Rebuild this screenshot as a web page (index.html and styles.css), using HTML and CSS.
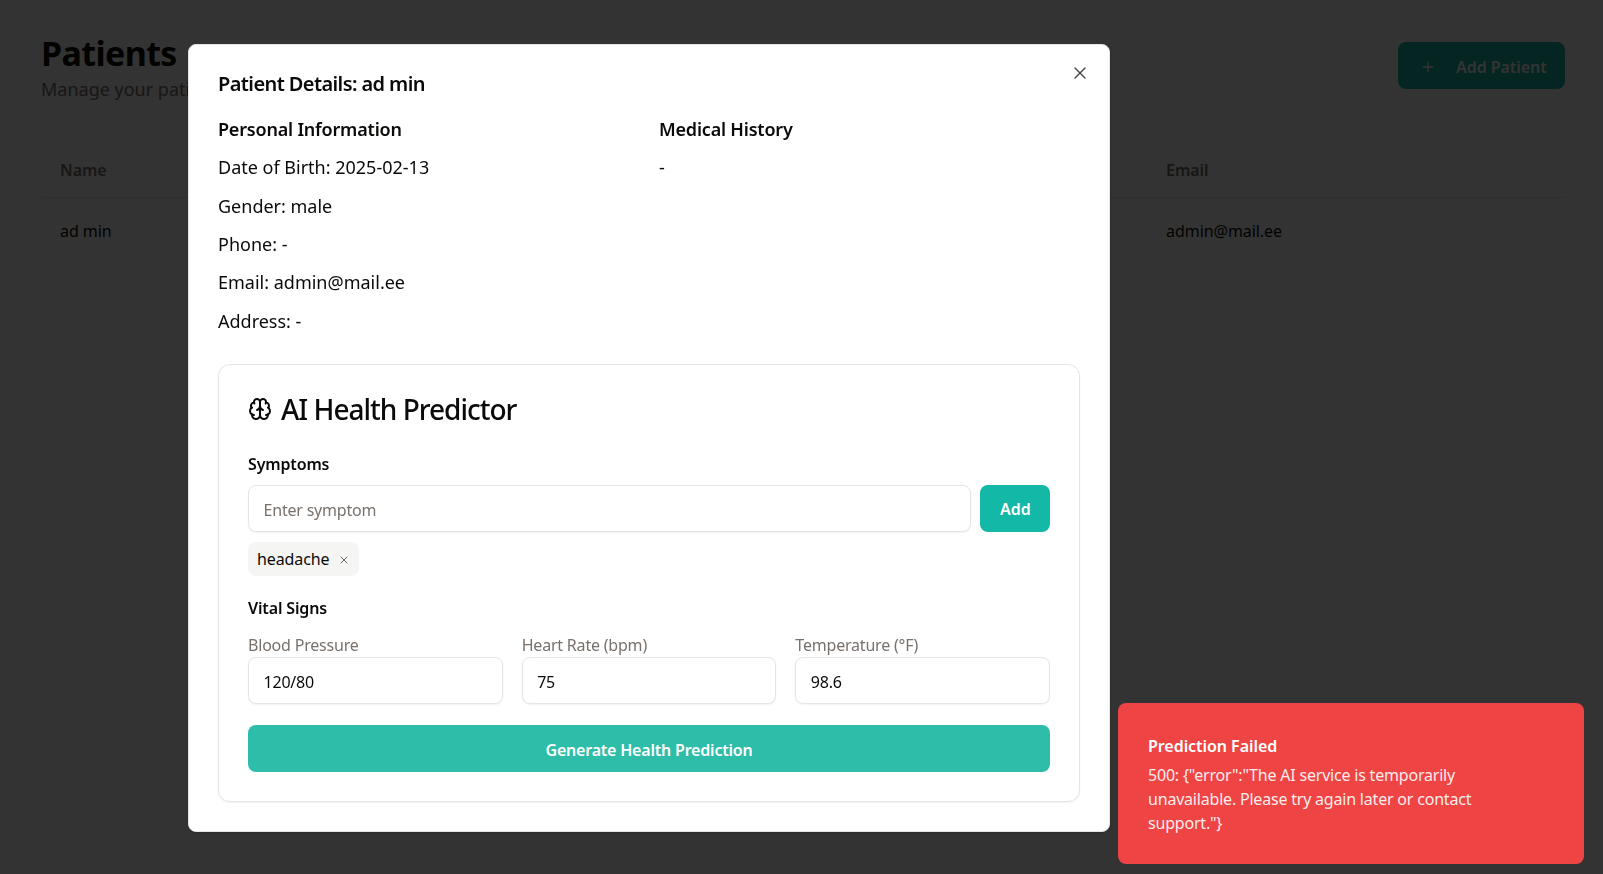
FILE: index.html
```html
<!DOCTYPE html>
<html lang="en">
<head>
<meta charset="utf-8">
<title>Patients</title>
<link rel="stylesheet" href="styles.css">
</head>
<body>
<main class="page">
  <header class="page-head">
    <div>
      <h1 class="page-title">Patients</h1>
      <p class="page-sub">Manage your patients</p>
    </div>
    <button class="add-patient" type="button">
      <svg class="plus" viewBox="0 0 24 24"><path d="M5 12h14M12 5v14"/></svg>
      <span>Add Patient</span>
    </button>
  </header>
  <div class="table">
    <div class="table-row table-headrow"><span>Name</span><span>Email</span></div>
    <div class="table-row"><span>ad min</span><span>admin@mail.ee</span></div>
  </div>
</main>

<div class="overlay">
  <section class="modal">
    <button class="close" type="button" aria-label="Close">
      <svg viewBox="0 0 24 24"><path d="M18 6 6 18M6 6l12 12"/></svg>
    </button>
    <h2 class="modal-title">Patient Details: ad min</h2>
    <div class="info-grid">
      <div>
        <h3 class="info-head">Personal Information</h3>
        <p class="info-line">Date of Birth: 2025-02-13</p>
        <p class="info-line">Gender: male</p>
        <p class="info-line">Phone: -</p>
        <p class="info-line">Email: admin@mail.ee</p>
        <p class="info-line">Address: -</p>
      </div>
      <div>
        <h3 class="info-head">Medical History</h3>
        <p class="info-line">-</p>
      </div>
    </div>
    <div class="card">
      <h2 class="card-title">
        <svg class="brain" viewBox="0 0 24 24"><path d="M12 5a3 3 0 1 0-5.997.125 4 4 0 0 0-2.526 5.77 4 4 0 0 0 .556 6.588A4 4 0 1 0 12 18Z"/><path d="M12 5a3 3 0 1 1 5.997.125 4 4 0 0 1 2.526 5.77 4 4 0 0 1-.556 6.588A4 4 0 1 1 12 18Z"/><path d="M15 13a4.5 4.5 0 0 1-3-4 4.5 4.5 0 0 1-3 4"/><path d="M17.599 6.5a3 3 0 0 0 .399-1.375"/><path d="M6.003 5.125A3 3 0 0 0 6.401 6.5"/><path d="M3.477 10.896a4 4 0 0 1 .585-.396"/><path d="M19.938 10.5a4 4 0 0 1 .585.396"/><path d="M6 18a4 4 0 0 1-1.967-.516"/><path d="M19.967 17.484A4 4 0 0 1 18 18"/></svg>
        <span>AI Health Predictor</span>
      </h2>
      <div class="section-label">Symptoms</div>
      <div class="symptom-row">
        <input class="field" type="text" placeholder="Enter symptom">
        <button class="add-btn" type="button">Add</button>
      </div>
      <div class="chips">
        <span class="chip">headache <svg class="chip-x" viewBox="0 0 24 24"><path d="M18 6 6 18M6 6l12 12"/></svg></span>
      </div>
      <div class="section-label vital-label">Vital Signs</div>
      <div class="vitals">
        <label class="vital"><span class="vital-name">Blood Pressure</span><input class="field" type="text" value="120/80"></label>
        <label class="vital"><span class="vital-name">Heart Rate (bpm)</span><input class="field" type="text" value="75"></label>
        <label class="vital"><span class="vital-name">Temperature (°F)</span><input class="field" type="text" value="98.6"></label>
      </div>
      <button class="generate" type="button">Generate Health Prediction</button>
    </div>
  </section>
</div>

<aside class="toast">
  <div class="toast-title">Prediction Failed</div>
  <div class="toast-text">500: {"error":"The AI service is temporarily unavailable. Please try again later or contact support."}</div>
</aside>
</body>
</html>
```
FILE: styles.css
```css
* { box-sizing: border-box; }
html, body { height: 100%; }
body {
  margin: 0;
  background: #fff;
  color: #0c0a09;
  font-family: "Noto Sans", "Open Sans", sans-serif;
  overflow: hidden;
}
h1, h2, h3, p { margin: 0; }
button, input { font-family: inherit; }
svg { fill: none; stroke: currentColor; stroke-width: 2; stroke-linecap: round; stroke-linejoin: round; }

.page { padding: 33px 38px 0 41px; }
.page-head { display: flex; justify-content: space-between; align-items: flex-start; }
.page-title { font-size: 34px; line-height: 40px; font-weight: 700; letter-spacing: -.6px; }
.page-sub { font-size: 18px; line-height: 26px; color: #78716c; margin-top: 3px; }
.add-patient {
  margin-top: 9px;
  width: 167px;
  height: 47px;
  border: 0;
  border-radius: 8px;
  background: #14b8a6;
  color: #fff;
  display: flex;
  align-items: center;
  gap: 20px;
  padding: 2px 0 0 22px;
  font-size: 16px;
  font-weight: 600;
  letter-spacing: -.05px;
}
.plus { width: 16px; height: 16px; flex: none; }
.table { margin-top: 49px; }
.table-row {
  display: grid;
  grid-template-columns: 1106px 1fr;
  padding: 0 19px;
  height: 66px;
  align-items: center;
  font-size: 16px;
  letter-spacing: -.05px;
}
.table-headrow { height: 47px; padding-bottom: 8px; border-bottom: 1px solid #e7e5e4; color: #78716c; font-weight: 600; }

.overlay {
  position: fixed;
  inset: 0;
  background: rgba(0, 0, 0, .8);
  display: flex;
  align-items: flex-start;
  padding: 44px 0 0 188px;
}
.modal {
  position: relative;
  width: 922px;
  height: 788px;
  padding: 25px 29px 0;
  background: #fff;
  border-radius: 8px;
  box-shadow: 0 1px 3px rgba(0,0,0,.2);
  border: 1px solid #e7e5e4;
}
.close {
  position: absolute;
  top: 18px;
  right: 19px;
  width: 20px;
  height: 20px;
  padding: 0;
  border: 0;
  background: none;
  color: #44403c;
}
.close svg { width: 20px; height: 20px; display: block; stroke-width: 1.6; }
.modal-title { font-size: 20px; line-height: 28px; font-weight: 600; letter-spacing: -.6px; }
.info-grid { display: grid; grid-template-columns: 441px 1fr; margin-top: 18px; }
.info-head { font-size: 18px; line-height: 26px; font-weight: 600; margin-bottom: 11.3px; letter-spacing: -.2px; }
.info-line { font-size: 18px; line-height: 28px; margin-top: 10.4px; }
.info-line:first-of-type { margin-top: 0; }

.card {
  margin-top: 28.7px;
  width: 862px;
  height: 438px;
  padding: 26px 29px;
  border: 1px solid #e7e5e4;
  border-radius: 12px;
  box-shadow: 0 1px 2px rgba(0,0,0,.06);
}
.card-title { display: flex; align-items: center; gap: 9px; font-size: 28px; line-height: 36px; font-weight: 500; letter-spacing: -1px; }
.brain { width: 24px; height: 24px; flex: none; }
.section-label { font-size: 16px; line-height: 24px; font-weight: 600; letter-spacing: -.15px; }
.card-title + .section-label { margin-top: 25px; }
.symptom-row { display: flex; gap: 9px; margin-top: 9px; }
.field {
  flex: 1;
  min-width: 0;
  width: 100%;
  height: 47px;
  padding: 3px 14.5px 0;
  border: 1px solid #e7e5e4;
  border-radius: 8px;
  background: #fff;
  color: #0c0a09;
  font-size: 16px;
  letter-spacing: -.2px;
  box-shadow: 0 1px 2px rgba(0,0,0,.05);
}
.field::placeholder { color: #78716c; opacity: 1; }
.add-btn {
  width: 70px;
  height: 47px;
  flex: none;
  border: 0;
  border-radius: 8px;
  background: #14b8a6;
  color: #fff;
  font-size: 16px;
  font-weight: 600;
  padding: 1px 0 0 1px;
}
.chips { display: flex; margin-top: 10px; }
.chip {
  display: flex;
  align-items: center;
  gap: 8px;
  height: 34px;
  padding: 0 9px;
  background: #f5f5f4;
  border-radius: 8px;
  font-size: 16px;
  letter-spacing: -.1px;
}
.chip-x { width: 12px; height: 12px; color: #57534e; margin-top: 3px; stroke-width: 1.8; }
.vital-label { margin-top: 20px; }
.vitals { display: grid; grid-template-columns: repeat(3, 1fr); gap: 19px; margin-top: 13px; }
.vital { display: block; }
.vital .field { display: block; }
.vital-name { display: block; height: 24px; font-size: 16px; line-height: 24px; color: #78716c; letter-spacing: -.2px; }
.generate {
  width: 100%;
  height: 47px;
  margin-top: 21px;
  padding: 3px 0 0;
  border: 0;
  border-radius: 8px;
  background: #2dbda8;
  color: #fff;
  font-size: 16px;
  font-weight: 600;
  letter-spacing: -.2px;
}

.toast {
  position: fixed;
  left: 1118px;
  top: 703px;
  width: 466px;
  height: 161px;
  padding: 31px 30px 0;
  background: #ef4444;
  color: #fff;
  border-radius: 8px;
}
.toast-title { font-size: 16px; line-height: 24px; font-weight: 600; letter-spacing: -.05px; margin-bottom: 5px; }
.toast-text { max-width: 360px; font-size: 16px; line-height: 24px; opacity: .9; letter-spacing: -.2px; }
```
